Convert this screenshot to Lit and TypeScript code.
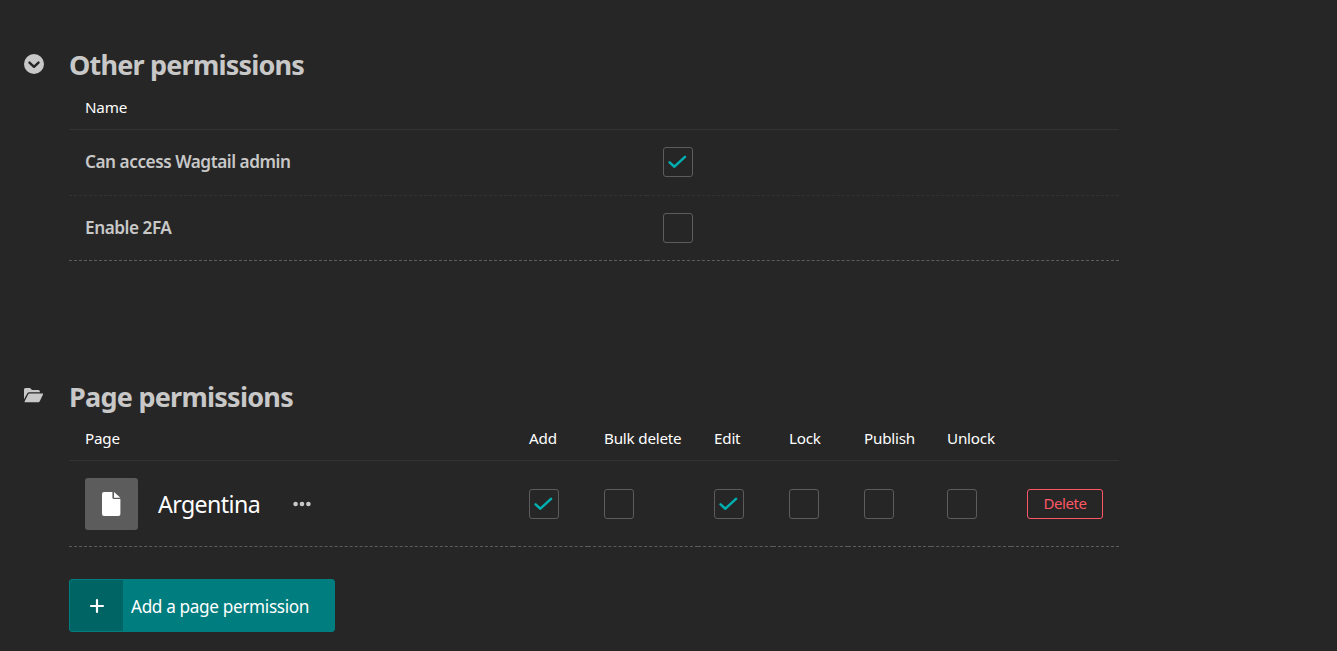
import { LitElement, html, css, svg } from "lit";
import { customElement, property } from "lit/decorators.js";

@customElement("perm-check")
export class PermCheck extends LitElement {
  @property({ type: Boolean }) checked = false;
  static styles = css`
    :host { display: block; width: 30px; height: 30px; box-sizing: border-box; border: 1px solid #5c5c5c; border-radius: 3px; }
    svg { display: block; width: 28px; height: 28px; }
  `;
  render() {
    return html`<svg viewBox="0 0 28 28">${this.checked
      ? svg`<path d="M5.6 14.4 10.4 18.7 21 8.9" fill="none" stroke="#00b0b1" stroke-width="2.5" stroke-linecap="round" stroke-linejoin="round" />`
      : null}</svg>`;
  }
}

@customElement("app-root")
export class AppRoot extends LitElement {
  static styles = css`
    :host { display: block; height: 651px; overflow: hidden; background: #262626; color: #fff; font-family: "Noto Sans", sans-serif; }
    .page { padding: 46px 0 0 24px; width: 1095px; box-sizing: content-box; }
    .section { display: grid; grid-template-columns: 45px 1050px; }
    .section.second { margin-top: 117px; }
    .icon { display: block; width: 20px; height: 20px; margin-top: 8px; }
    h2 { margin: 0; height: 38px; line-height: 38px; font-size: 27px; font-weight: 700; color: #c8c8c8; white-space: nowrap; }
    .other { letter-spacing: -0.8px; }
    .pagesh { letter-spacing: -0.75px; }
    .row { display: grid; }
    .two { grid-template-columns: 578px 472px; }
    .eight { grid-template-columns: 444px 75px 110px 75px 75px 83px 80px 108px; }
    .cell { box-sizing: border-box; padding: 0 16px; display: flex; align-items: center; border-bottom: 1px solid #333; white-space: nowrap; }
    .head .cell { height: 46px; font-size: 15.2px; letter-spacing: -0.2px; }
    .eight.head .cell { height: 45px; }
    .first .cell { height: 66px; border-bottom-style: dashed; padding-bottom: 1px; }
    .last .cell { height: 65px; border-bottom: 1px dashed #5c5c5c; }
    .pages .cell { height: 86px; border-bottom: 1px dashed #5c5c5c; }
    .row .label { font-size: 17.2px; font-weight: 600; color: #c8c8c8; letter-spacing: -0.46px; padding-bottom: 2px; }
    .thumb { width: 53px; height: 52px; border-radius: 3px; background: #5c5c5c; display: block; }
    .title { font-size: 23.2px; margin-left: 20px; width: 135px; letter-spacing: -0.6px; }
    .dots { width: 18px; height: 6px; display: block; }
    .del { box-sizing: border-box; width: 76px; height: 30px; border: 1px solid #fd5765; border-radius: 3px; color: #fd5765; background: none; padding: 0 0 2px; font: 15px "Noto Sans", sans-serif; letter-spacing: -0.45px; }
    .add { display: flex; box-sizing: border-box; width: 266px; height: 53px; margin-top: 32px; padding: 0; border: 1px solid #007d7e; border-radius: 3px; overflow: hidden; background: #007d7e; color: #fff; align-items: center; font: 17.2px "Noto Sans", sans-serif; letter-spacing: -0.35px; }
    .plus { display: block; width: 53px; height: 51px; background: #006465; }
    .addtext { margin-left: 8px; padding-top: 2px; white-space: nowrap; }
  `;

  render() {
    const cols = ["Add", "Bulk delete", "Edit", "Lock", "Publish", "Unlock"];
    return html`
      <div class="page">
        <section class="section">
          <svg class="icon" viewBox="0 0 20 20">
            <circle cx="10" cy="10" r="10" fill="#c8c8c8" />
            <path d="M5.5 8.6 10 12.8 14.5 8.6" fill="none" stroke="#262626" stroke-width="2.5" stroke-linecap="round" stroke-linejoin="round" />
          </svg>
          <div>
            <h2 class="other">Other permissions</h2>
            <div class="row two head"><div class="cell">Name</div><div class="cell"></div></div>
            <div class="row two first"><div class="cell label">Can access Wagtail admin</div><div class="cell"><perm-check checked></perm-check></div></div>
            <div class="row two last"><div class="cell label">Enable 2FA</div><div class="cell"><perm-check></perm-check></div></div>
          </div>
        </section>
        <section class="section second">
          <svg class="icon" viewBox="0 0 20 20" fill="#c8c8c8">
            <path d="M0 3.5Q0 2 1.5 2H6L8 4.1H14.2Q16 4.1 16 6V6.2H5.3Q4 6.2 3.4 7.3L0 13.2Z" />
            <path d="M5.4 7.6H18.6Q19.4 7.6 19 8.5L15.9 14.9Q15.4 16.2 14.2 16.2H.9Q.3 16.2.6 15.4L4.1 8.4Q4.5 7.6 5.4 7.6Z" />
          </svg>
          <div>
            <h2 class="pagesh">Page permissions</h2>
            <div class="row eight head">
              <div class="cell">Page</div>
              ${cols.map((c) => html`<div class="cell">${c}</div>`)}
              <div class="cell"></div>
            </div>
            <div class="row eight pages">
              <div class="cell">
                <svg class="thumb" viewBox="0 0 53 52">
                  <path d="M19 14H27.4V19.5Q27.4 21 29 21H35.4V36Q35.4 38 33.4 38H19Q17 38 17 36V16Q17 14 19 14Z" fill="#fff" />
                  <path d="M29 14.1 35.4 19.7H29Z" fill="#fff" />
                </svg>
                <span class="title">Argentina</span>
                <svg class="dots" viewBox="0 0 18 6" fill="#c8c8c8"><circle cx="2.6" cy="3" r="2.3" /><circle cx="9" cy="3" r="2.3" /><circle cx="15.4" cy="3" r="2.3" /></svg>
              </div>
              ${cols.map((c) => html`<div class="cell"><perm-check ?checked=${c === "Add" || c === "Edit"}></perm-check></div>`)}
              <div class="cell"><button class="del">Delete</button></div>
            </div>
            <button class="add">
              <svg class="plus" viewBox="0 0 53 51"><path d="M27 20V32M21 26H33" stroke="#fff" stroke-width="2.2" stroke-linecap="round" /></svg>
              <span class="addtext">Add a page permission</span>
            </button>
          </div>
        </section>
      </div>
    `;
  }
}
